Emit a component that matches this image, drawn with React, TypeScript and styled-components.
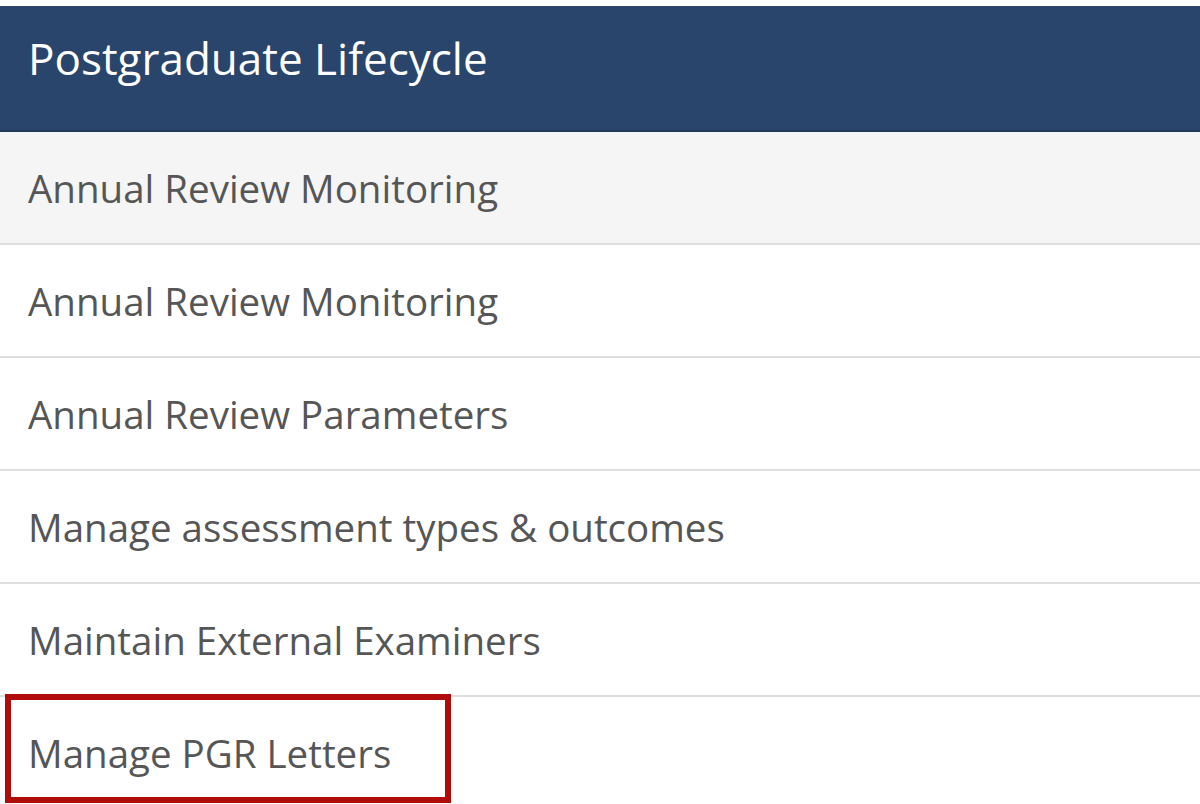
import * as React from "react";
import styled, { createGlobalStyle } from "styled-components";

const items = [
  { label: "Annual Review Monitoring", hover: true },
  { label: "Annual Review Monitoring" },
  { label: "Annual Review Parameters" },
  { label: "Manage assessment types & outcomes" },
  { label: "Maintain External Examiners" },
  { label: "Manage PGR Letters", highlighted: true },
];

const GlobalStyle = createGlobalStyle`
  html, body {
    margin: 0;
    padding: 0;
    background: #fff;
    font-family: "Open Sans", "Noto Sans", sans-serif;
    overflow: hidden;
  }
`;

const Panel = styled.section`
  margin-top: 6px;
  width: 100%;
`;

const Header = styled.h2`
  margin: 0;
  height: 126px;
  display: flex;
  align-items: center;
  padding: 0 28px;
  padding-bottom: 20px;
  box-sizing: border-box;
  background: #2a456b;
  border-bottom: 2px solid #213a5c;
  color: #fff;
  font-size: 44px;
  font-weight: 400;
`;

const List = styled.ul`
  list-style: none;
  margin: 0;
  padding: 0;
`;

const Row = styled.li<{ $hover?: boolean }>`
  position: relative;
  height: 111px;
  display: flex;
  align-items: center;
  padding: 0 28px;
  border-bottom: 2px solid #dedede;
  background: ${(p) => (p.$hover ? "#f5f5f5" : "#fff")};
  color: #565656;
  font-size: 38.5px;
`;

const Highlight = styled.span`
  position: absolute;
  left: 5px;
  top: -3px;
  width: 446px;
  height: 109px;
  box-sizing: border-box;
  border: 6px solid #b00c0c;
  pointer-events: none;
`;

const App = () => {
  return (
    <>
      <GlobalStyle />
      <Panel>
        <Header>Postgraduate Lifecycle</Header>
        <List>
          {items.map((item, i) => (
            <Row key={i} $hover={item.hover}>
              {item.label}
              {item.highlighted && <Highlight />}
            </Row>
          ))}
        </List>
      </Panel>
    </>
  );
};

export default App;
